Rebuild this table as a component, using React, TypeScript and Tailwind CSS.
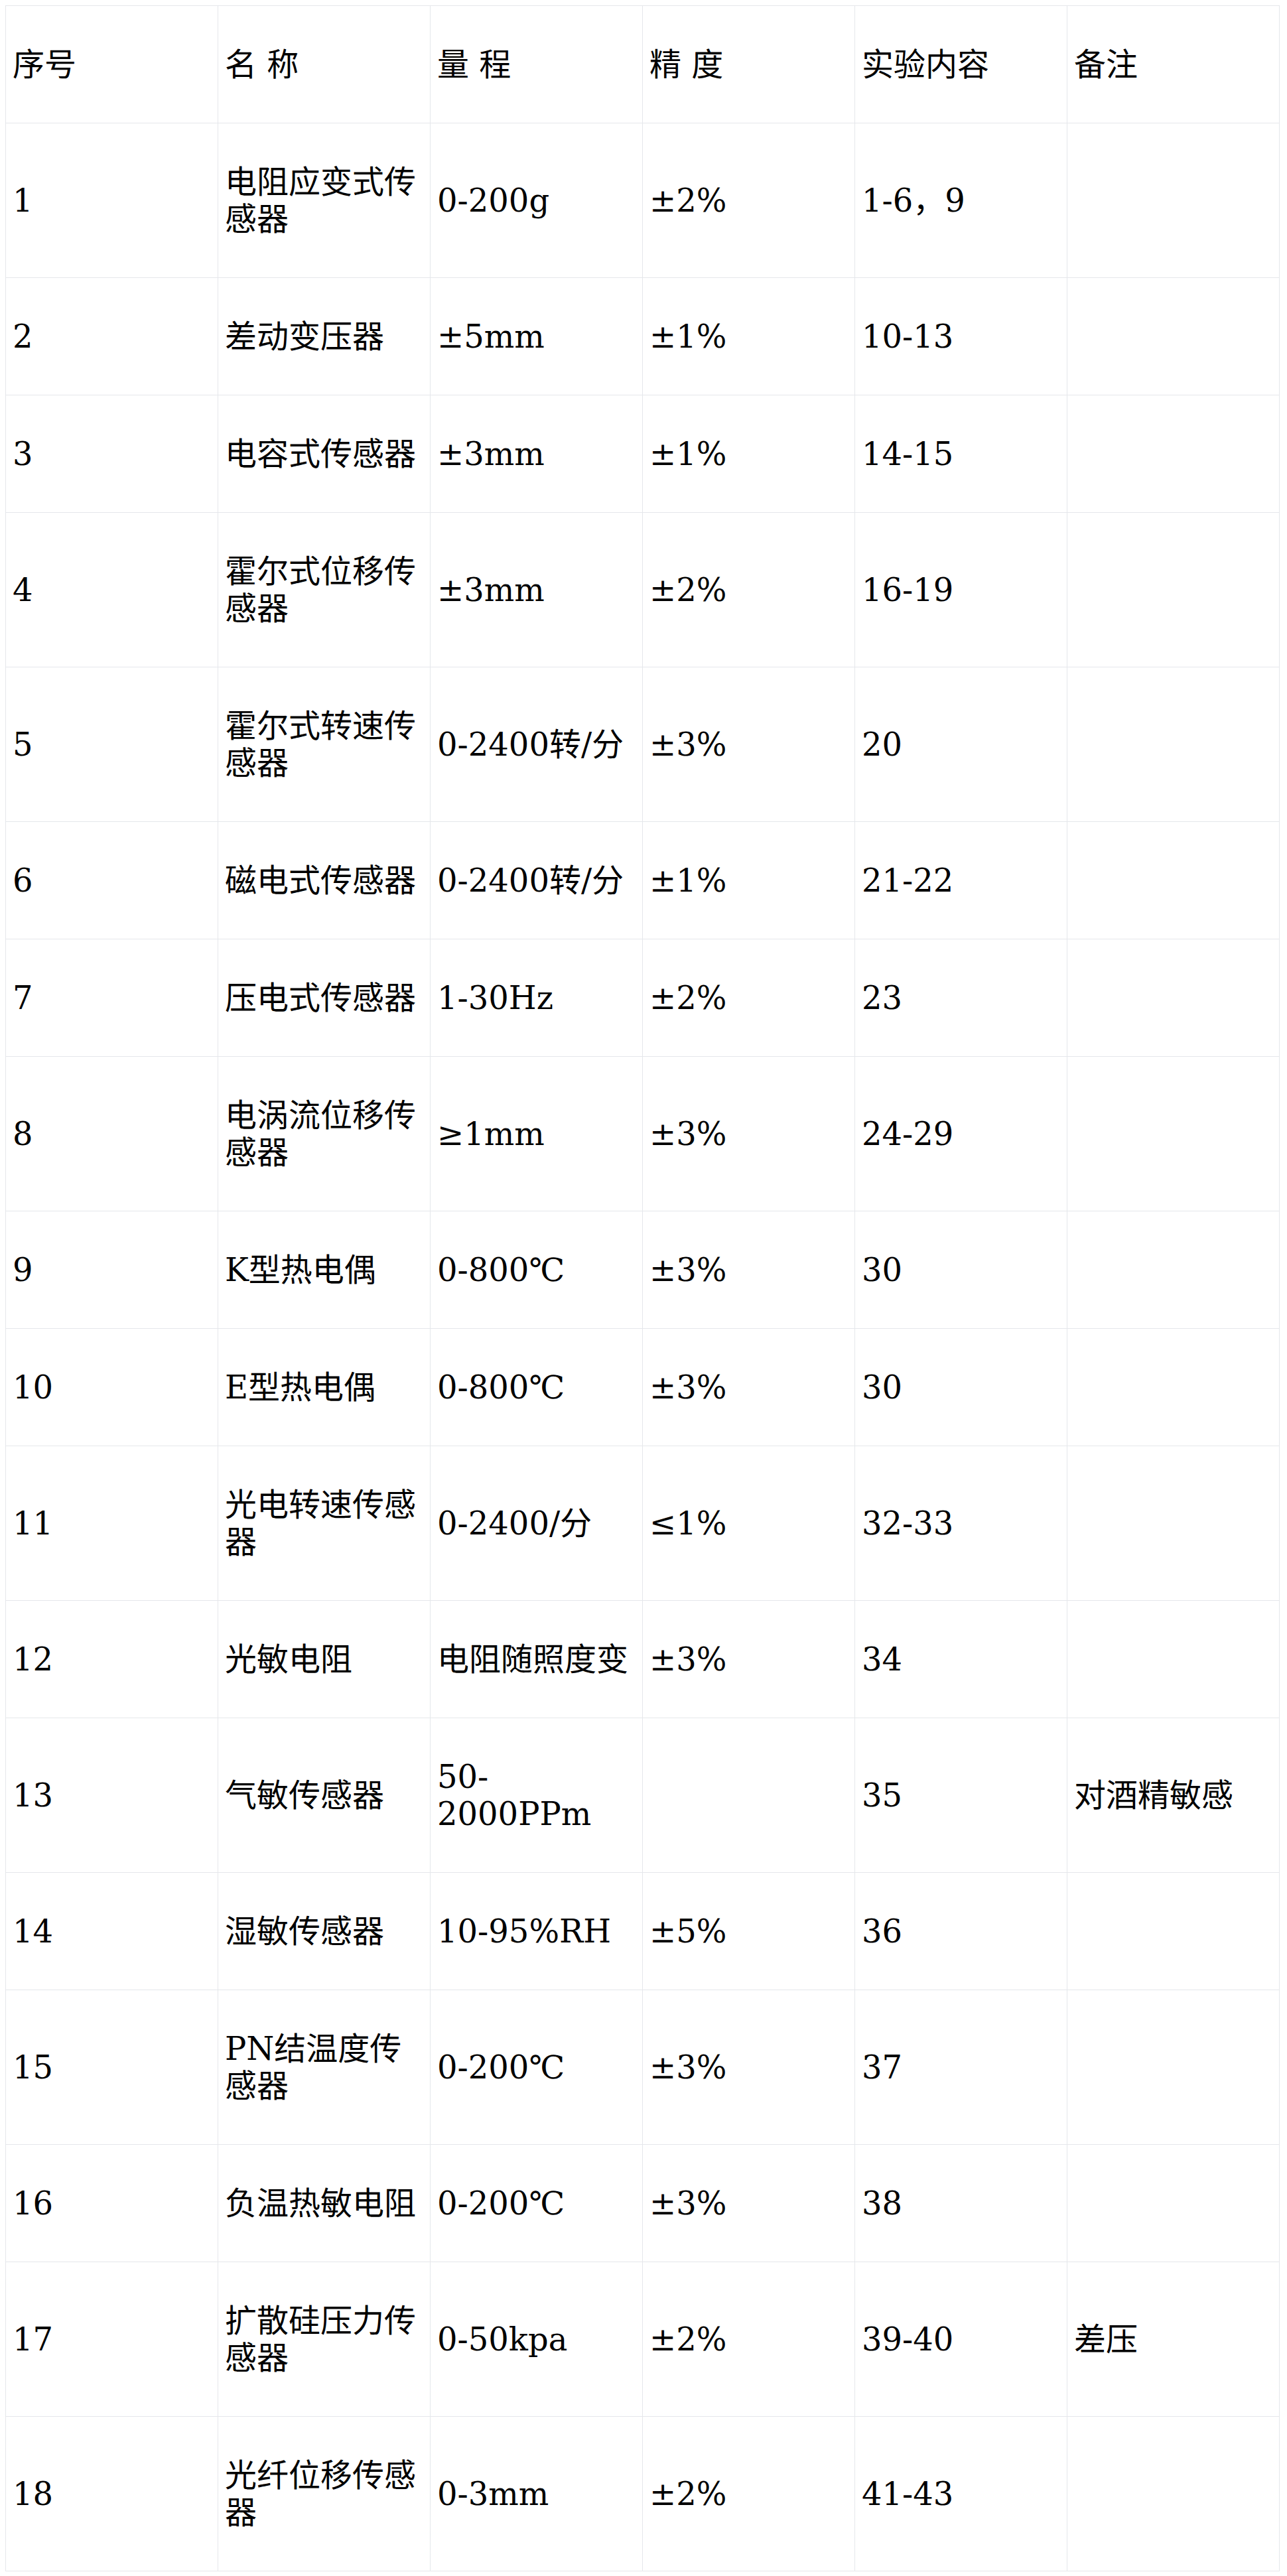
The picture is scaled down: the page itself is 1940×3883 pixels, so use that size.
const headers = ["序号", "名 称", "量 程", "精 度", "实验内容", "备注"];

const rows: string[][] = [
  ["1", "电阻应变式传感器", "0-200g", "±2%", "1-6，9", ""],
  ["2", "差动变压器", "±5mm", "±1%", "10-13", ""],
  ["3", "电容式传感器", "±3mm", "±1%", "14-15", ""],
  ["4", "霍尔式位移传感器", "±3mm", "±2%", "16-19", ""],
  ["5", "霍尔式转速传感器", "0-2400转/分", "±3%", "20", ""],
  ["6", "磁电式传感器", "0-2400转/分", "±1%", "21-22", ""],
  ["7", "压电式传感器", "1-30Hz", "±2%", "23", ""],
  ["8", "电涡流位移传感器", "≥1mm", "±3%", "24-29", ""],
  ["9", "K型热电偶", "0-800℃", "±3%", "30", ""],
  ["10", "E型热电偶", "0-800℃", "±3%", "30", ""],
  ["11", "光电转速传感器", "0-2400/分", "≤1%", "32-33", ""],
  ["12", "光敏电阻", "电阻随照度变", "±3%", "34", ""],
  ["13", "气敏传感器", "50-2000PPm", "", "35", "对酒精敏感"],
  ["14", "湿敏传感器", "10-95%RH", "±5%", "36", ""],
  ["15", "PN结温度传感器", "0-200℃", "±3%", "37", ""],
  ["16", "负温热敏电阻", "0-200℃", "±3%", "38", ""],
  ["17", "扩散硅压力传感器", "0-50kpa", "±2%", "39-40", "差压"],
  ["18", "光纤位移传感器", "0-3mm", "±2%", "41-43", ""],
];

const cell =
  "border border-[#e5e7eb] px-[10px] py-[60px] align-middle text-left font-normal";

export default function App() {
  return (
    <div className="bg-white p-2 text-black font-['DejaVu_Serif','Noto_Sans_CJK_SC',serif] text-[48px] leading-[56px]">
      <table className="w-[1921px] table-fixed border-collapse">
        <thead>
          <tr>
            {headers.map((h) => (
              <th key={h} className={cell}>
                {h}
              </th>
            ))}
          </tr>
        </thead>
        <tbody>
          {rows.map((row) => (
            <tr key={row[0]}>
              {row.map((v, i) => (
                <td key={i} className={cell}>
                  {v}
                </td>
              ))}
            </tr>
          ))}
        </tbody>
      </table>
    </div>
  );
}
